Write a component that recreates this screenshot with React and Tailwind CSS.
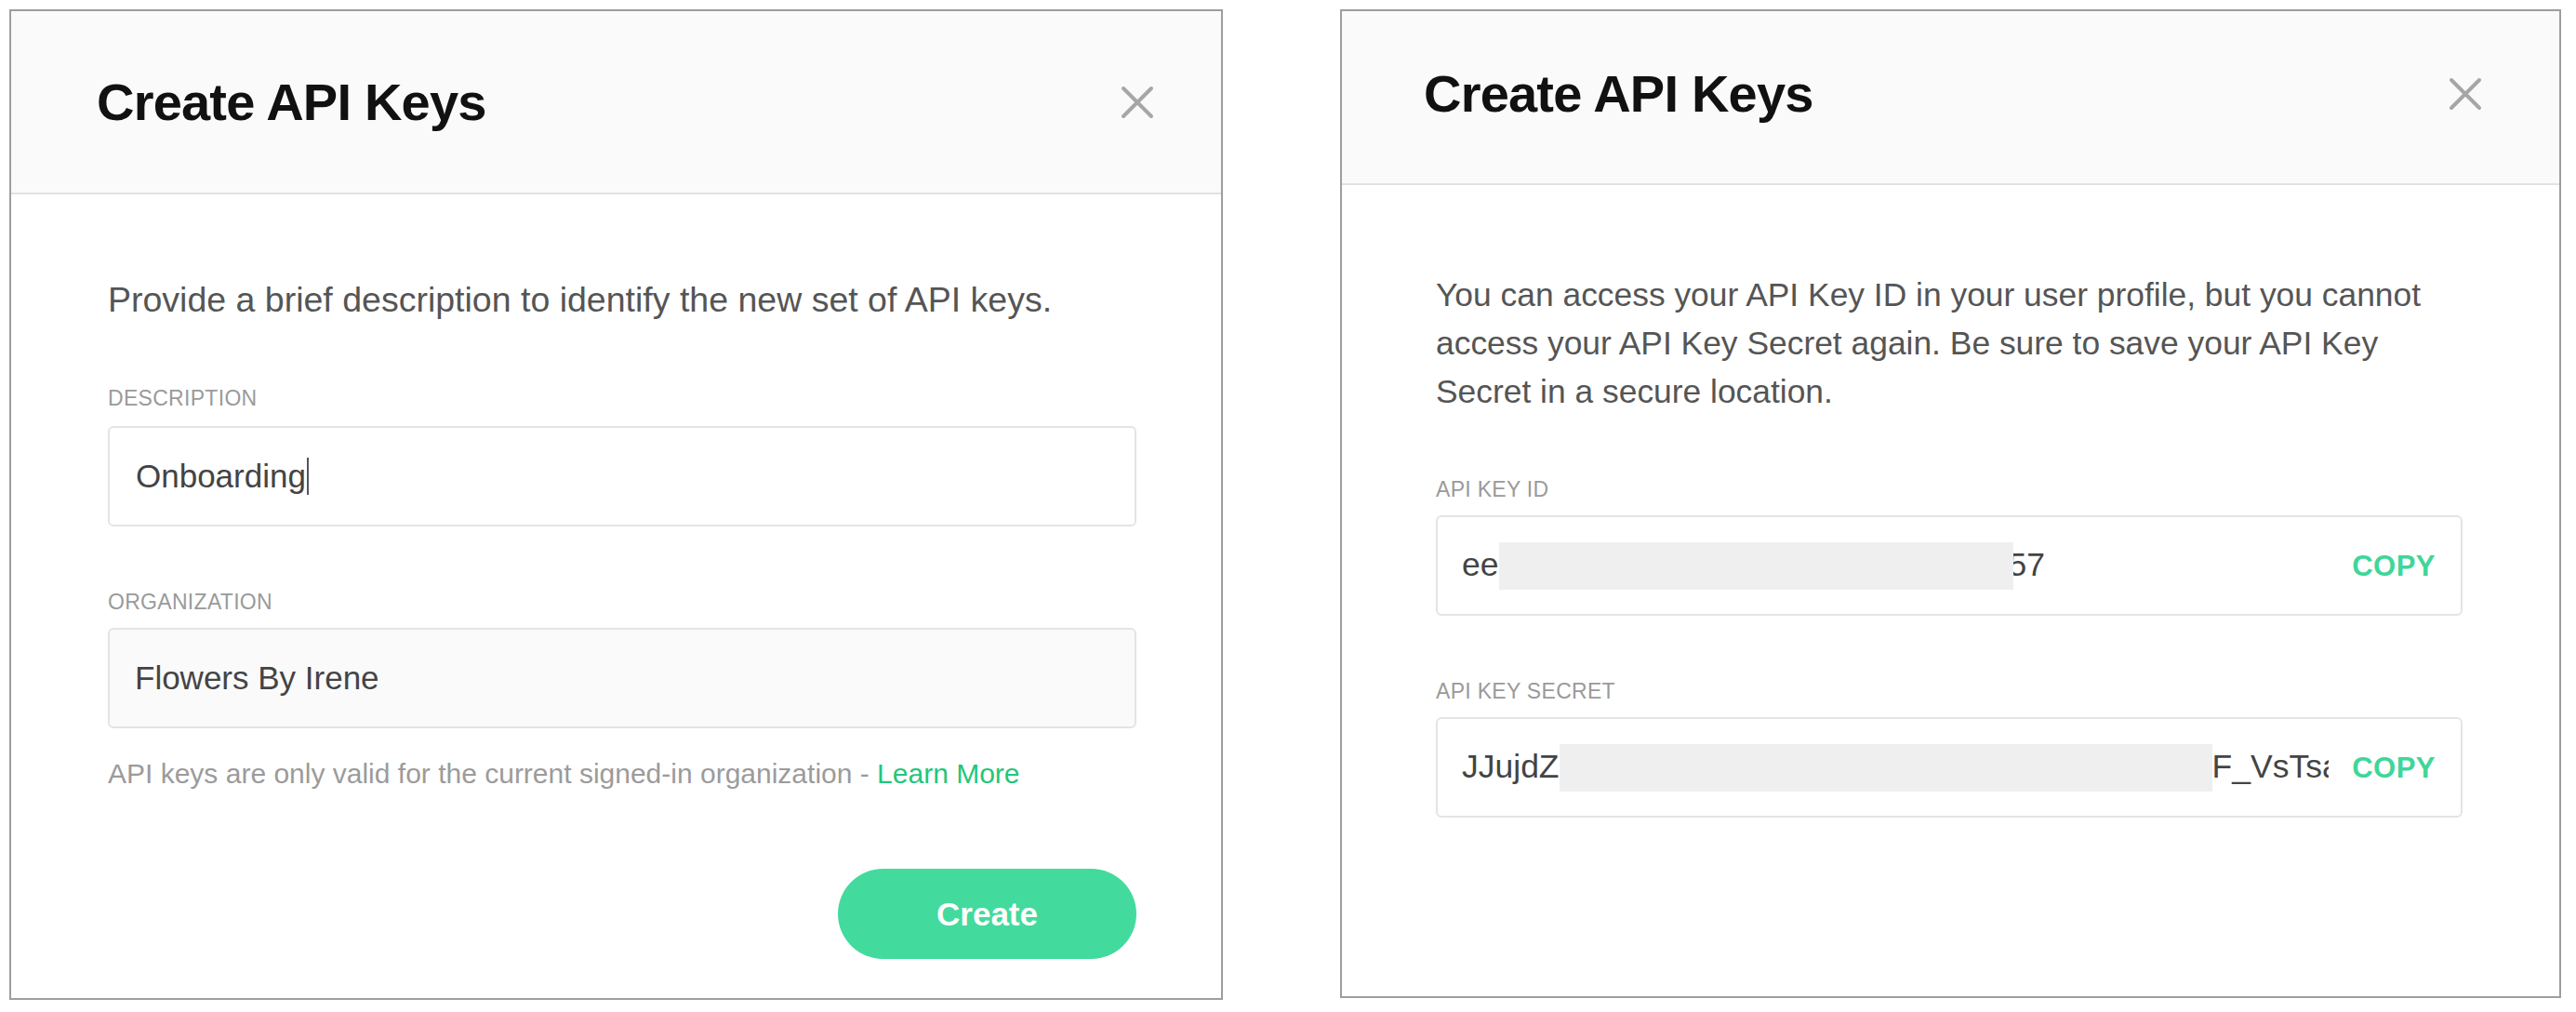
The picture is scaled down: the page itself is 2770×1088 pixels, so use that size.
import React from 'react';

const font = "font-['Liberation_Sans',Arial,sans-serif]";

const CloseIcon = () => (
  <svg width="36" height="36" viewBox="0 0 36 36" fill="none">
    <path d="M3 3L33 33M33 3L3 33" stroke="#a6a6a6" strokeWidth="4" strokeLinecap="round" />
  </svg>
);

const Label = ({ children, className = '' }) => (
  <div className={`text-[23px] leading-none tracking-[0.3px] text-[#9a9a9a] uppercase ${className}`}>
    {children}
  </div>
);

const Redacted = ({ width }) => (
  <span className="relative z-10 shrink-0 h-[51px] bg-[#f0efef]" style={{ width }} />
);

const KeyField = ({ children }) => (
  <div className="mt-[16px] h-[108px] flex items-center border-2 border-[#e4e4e0] rounded-[6px] bg-white pl-[26px] pr-[27px]">
    <div className="flex-1 flex items-center overflow-hidden whitespace-nowrap text-[35.5px] leading-none text-[#444]">
      {children}
    </div>
    <button className="ml-[25px] shrink-0 text-[31px] leading-none font-bold tracking-[0.5px] text-[#3fd699]">
      COPY
    </button>
  </div>
);

const CreateForm = () => (
  <div className="w-[1305px] h-[1065px] border-2 border-[#9e9e9e] bg-white flex flex-col">
    {/* Header */}
    <div className="h-[197px] shrink-0 flex items-center justify-between bg-[#fafafa] border-b-2 border-[#e2e2de] pl-[92px] pr-[72px]">
      <h2 className="text-[56px] leading-none font-bold tracking-[-0.8px] text-[#111]">Create API Keys</h2>
      <CloseIcon />
    </div>

    {/* Body */}
    <div className="flex flex-col pl-[104px] pr-[91px]">
      <p className="mt-[95px] text-[37.5px] leading-none text-[#555]">
        Provide a brief description to identify the new set of API keys.
      </p>

      <Label className="mt-[75px]">Description</Label>
      <div className="mt-[18px] h-[108px] flex items-center border-2 border-[#e4e4e0] rounded-[6px] bg-white pl-[28px]">
        <span className="text-[35px] leading-none text-[#444]">Onboarding</span>
        <span className="ml-[1px] w-[2px] h-[40px] bg-[#555]" />
      </div>

      <Label className="mt-[70px]">Organization</Label>
      <div className="mt-[16px] h-[108px] flex items-center border-2 border-[#e4e4e0] rounded-[6px] bg-[#fafafa] pl-[27px]">
        <span className="text-[35px] leading-none text-[#444]">Flowers By Irene</span>
      </div>

      <p className="mt-[34px] text-[30px] leading-none text-[#9b9b9b]">
        API keys are only valid for the current signed-in organization -{' '}
        <a className="text-[#22c67c]">Learn More</a>
      </p>

      <button className="mt-[87px] self-end w-[321px] h-[97px] rounded-full bg-[#43da9e] text-white text-[35px] font-bold leading-none">
        Create
      </button>
    </div>
  </div>
);

const KeysCreated = () => (
  <div className="w-[1313px] h-[1063px] border-2 border-[#9e9e9e] bg-white flex flex-col">
    {/* Header */}
    <div className="h-[187px] shrink-0 flex items-center justify-between bg-[#fafafa] border-b-2 border-[#e2e2de] pl-[88px] pr-[83px] pb-[8px]">
      <h2 className="text-[56px] leading-none font-bold tracking-[-0.8px] text-[#111]">Create API Keys</h2>
      <CloseIcon />
    </div>

    {/* Body */}
    <div className="flex flex-col pl-[101px] pr-[104px]">
      <p className="mt-[92px] text-[35.4px] leading-[52px] text-[#555]">
        You can access your API Key ID in your user profile, but you cannot
        <br />
        access your API Key Secret again. Be sure to save your API Key
        <br />
        Secret in a secure location.
      </p>

      <Label className="mt-[68px]">API Key ID</Label>
      <KeyField>
        <span>ee</span>
        <Redacted width={553} />
        <span className="-ml-[5px]">57</span>
      </KeyField>

      <Label className="mt-[70px]">API Key Secret</Label>
      <KeyField>
        <span>JJujdZ</span>
        <Redacted width={702} />
        <span>F_VsTsa8kQw2Lp</span>
      </KeyField>
    </div>
  </div>
);

export default function App() {
  return (
    <div className={`${font} w-[2770px] h-[1088px] bg-white flex items-start gap-[126px] pl-[10px] pt-[10px]`}>
      <CreateForm />
      <KeysCreated />
    </div>
  );
}
